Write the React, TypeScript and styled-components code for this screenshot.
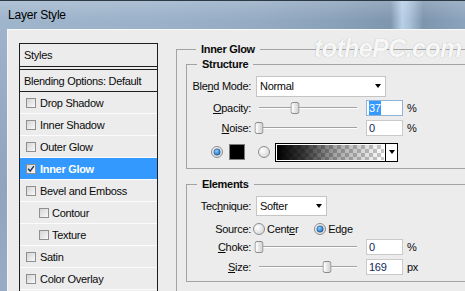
import React from "react";
import styled, { createGlobalStyle } from "styled-components";

const GlobalStyle = createGlobalStyle`
  html, body {
    margin: 0;
    padding: 0;
    overflow: hidden;
    background: #ececec;
  }
  body {
    font-family: "Liberation Sans", Arial, sans-serif;
    font-size: 11px;
    letter-spacing: -0.3px;
    color: #0a0a0a;
  }
`;

interface StyleItem {
  label: string;
  checked?: boolean;
  selected?: boolean;
  indent?: boolean;
}

const styleItems: StyleItem[] = [
  { label: "Drop Shadow" },
  { label: "Inner Shadow" },
  { label: "Outer Glow" },
  { label: "Inner Glow", checked: true, selected: true },
  { label: "Bevel and Emboss" },
  { label: "Contour", indent: true },
  { label: "Texture", indent: true },
  { label: "Satin" },
  { label: "Color Overlay" },
];

const Slider = ({ value, max }: { value: number; max: number }) => (
  <Track>
    <Groove />
    <Thumb style={{ left: `${(value / max) * 100}%` }}>
      <svg width="9" height="12" viewBox="0 0 9 12">
        <defs>
          <linearGradient id="thumbFill" x1="0" y1="0" x2="1" y2="0">
            <stop offset="0" stopColor="#fdfdfd" />
            <stop offset="1" stopColor="#cfcfcf" />
          </linearGradient>
        </defs>
        <path
          d="M0.5 2.5 Q0.5 0.5 2.5 0.5 H6.5 Q8.5 0.5 8.5 2.5 V9.5 Q8.5 11.5 6.5 11.5 H2.5 Q0.5 11.5 0.5 9.5 Z"
          fill="url(#thumbFill)"
          stroke="#8a8a8a"
        />
        <line x1="2.5" y1="3" x2="2.5" y2="9.5" stroke="#ffffff" />
      </svg>
    </Thumb>
  </Track>
);

const Radio = ({ on }: { on?: boolean }) => (
  <svg width="12" height="12" viewBox="0 0 12 12">
    <defs>
      <radialGradient id="radioFill" cx="0.35" cy="0.35" r="0.8">
        <stop offset="0" stopColor="#ffffff" />
        <stop offset="1" stopColor="#d2d2d2" />
      </radialGradient>
      <radialGradient id="radioDot" cx="0.4" cy="0.35" r="0.7">
        <stop offset="0" stopColor="#8fd0ff" />
        <stop offset="1" stopColor="#1565c0" />
      </radialGradient>
    </defs>
    <circle cx="6" cy="6" r="5.5" fill="url(#radioFill)" stroke="#8c8c8c" />
    {on && <circle cx="6" cy="6" r="3.2" fill="url(#radioDot)" stroke="#23507f" strokeWidth="0.6" />}
  </svg>
);

export default function App() {
  return (
    <>
      <GlobalStyle />
      <Window>
        <TitleBar>
          <Title>Layer Style</Title>
        </TitleBar>
        <Frame>
          <GlassEdge />
          <Body>
            <StylesPanel>
              <PanelHeader>Styles</PanelHeader>
              <PanelHeader $split>Blending Options: Default</PanelHeader>
              {styleItems.map((item) => (
                <StyleRow key={item.label} $indent={item.indent} $selected={item.selected}>
                  <CheckBox>
                    {item.checked && (
                      <svg width="8" height="8" viewBox="0 0 8 8">
                        <path d="M1.2 3.8 L3.2 6.2 L6.8 1.2" fill="none" stroke="#1d2d52" strokeWidth="1.4" />
                      </svg>
                    )}
                  </CheckBox>
                  <span>{item.label}</span>
                </StyleRow>
              ))}
            </StylesPanel>

            <OuterGroup>
              <Legend>Inner Glow</Legend>
              <Group $pb={6}>
                <Legend>Structure</Legend>
                <FieldRow $h={22}>
                  <Label>
                    Ble<Key>n</Key>d Mode:
                  </Label>
                  <Select $w={130} $h={21}>
                    <span>Normal</span>
                    <Arrow />
                  </Select>
                </FieldRow>
                <FieldRow $h={18} $mt={2}>
                  <Label>
                    <Key>O</Key>pacity:
                  </Label>
                  <Slider value={37} max={100} />
                  <NumberBox $focused>
                    <Highlight>37</Highlight>
                  </NumberBox>
                  <Unit>%</Unit>
                </FieldRow>
                <FieldRow $h={18} $mt={2}>
                  <Label>
                    <Key>N</Key>oise:
                  </Label>
                  <Slider value={0} max={100} />
                  <NumberBox>0</NumberBox>
                  <Unit>%</Unit>
                </FieldRow>
                <ColorRow>
                  <Radio on />
                  <Swatch />
                  <Radio />
                  <GradientPicker>
                    <GradientFill />
                    <PickerArrow>
                      <Arrow />
                    </PickerArrow>
                  </GradientPicker>
                </ColorRow>
              </Group>

              <Group $pb={5} $mt={9}>
                <Legend>Elements</Legend>
                <FieldRow $h={21}>
                  <Label>
                    Tec<Key>h</Key>nique:
                  </Label>
                  <Select $w={71} $h={20}>
                    <span>Softer</span>
                    <Arrow />
                  </Select>
                </FieldRow>
                <FieldRow $h={18} $mt={4}>
                  <Label>Source:</Label>
                  <RadioOption>
                    <Radio />
                    <span>
                      Cent<Key>e</Key>r
                    </span>
                  </RadioOption>
                  <RadioOption $gap={16}>
                    <Radio on />
                    <span>
                      Ed<Key>g</Key>e
                    </span>
                  </RadioOption>
                </FieldRow>
                <FieldRow $h={18}>
                  <Label>
                    <Key>C</Key>hoke:
                  </Label>
                  <Slider value={0} max={100} />
                  <NumberBox>0</NumberBox>
                  <Unit>%</Unit>
                </FieldRow>
                <FieldRow $h={18} $mt={2}>
                  <Label>
                    <Key>S</Key>ize:
                  </Label>
                  <Slider value={169} max={245} />
                  <NumberBox>169</NumberBox>
                  <Unit>px</Unit>
                </FieldRow>
              </Group>
            </OuterGroup>
          </Body>
        </Frame>
        <Watermark>tothePC.com</Watermark>
      </Window>
    </>
  );
}

const Window = styled.div`
  position: relative;
  width: 465px;
  height: 291px;
  overflow: hidden;
  display: flex;
  flex-direction: column;
`;

const TitleBar = styled.header`
  height: 28px;
  flex: none;
  display: flex;
  align-items: center;
  padding-left: 8px;
  border-top: 1px solid #2e3946;
  background:
    linear-gradient(to bottom, rgba(255, 255, 255, 0.18), rgba(255, 255, 255, 0) 70%),
    linear-gradient(
      to right,
      #9fb5cc 0%,
      #9ab1c9 35%,
      #94abc3 55%,
      #8aa1ba 72%,
      #7f96af 84%,
      #b8cfe5 86.5%,
      #a9c1d9 88%,
      #7e95ae 91%,
      #8ba3bc 100%
    );
`;

const Title = styled.span`
  font-size: 12px;
  color: #000;
  letter-spacing: -0.2px;
`;

const Frame = styled.div`
  flex: 1;
  display: flex;
  min-height: 0;
`;

const GlassEdge = styled.div`
  width: 7px;
  flex: none;
  background: linear-gradient(to bottom, #9db3ca, #8ea5bd 60%, #97adc5);
`;

const Body = styled.main`
  flex: 1;
  display: flex;
  align-items: flex-start;
  gap: 18px;
  padding: 13px 0 0 11px;
  background: #ececec;
  border-top: 1px solid #fafafa;
  border-left: 1px solid #f6f6f6;
  overflow: hidden;
`;

const StylesPanel = styled.nav`
  width: 139px;
  height: 260px;
  flex: none;
  box-sizing: border-box;
  border: 1px solid #1e1e1e;
  border-bottom: none;
  display: flex;
  flex-direction: column;
`;

const PanelHeader = styled.div<{ $split?: boolean }>`
  height: ${(p) => (p.$split ? 21 : 22)}px;
  flex: none;
  display: flex;
  align-items: center;
  padding-left: 4px;
  border-bottom: 1px solid #1e1e1e;
  ${(p) => (p.$split ? "border-top: 1px solid #1e1e1e; margin-top: 2px;" : "")}
`;

const StyleRow = styled.div<{ $indent?: boolean; $selected?: boolean }>`
  height: 21px;
  flex: none;
  display: flex;
  align-items: center;
  gap: ${(p) => (p.$indent ? 3 : 4)}px;
  padding-left: ${(p) => (p.$indent ? 19 : 6)}px;
  border-bottom: 1px solid #fcfcfc;
  background: ${(p) => (p.$selected ? "#3399ff" : "transparent")};
  color: ${(p) => (p.$selected ? "#ffffff" : "inherit")};
  font-weight: ${(p) => (p.$selected ? "bold" : "normal")};
`;

const CheckBox = styled.span`
  width: 10px;
  height: 10px;
  flex: none;
  box-sizing: border-box;
  border: 1px solid #8e8f8f;
  background: linear-gradient(135deg, #d4d4d4, #f9f9f9);
  display: flex;
  align-items: center;
  justify-content: center;
`;

const OuterGroup = styled.fieldset`
  width: 330px;
  flex: none;
  margin: 0;
  padding: 2px 0 40px 9px;
  border: 1px solid #a3a3a3;
  min-width: 0;
`;

const Group = styled.fieldset<{ $pb: number; $mt?: number }>`
  margin: ${(p) => p.$mt ?? 0}px 0 0 0;
  padding: 4px 0 ${(p) => p.$pb}px 0;
  border: 1px solid #a3a3a3;
  min-width: 0;
`;

const Legend = styled.legend`
  margin-left: 10px;
  padding: 0 5px;
  font-weight: bold;
  font-size: 11px;
  line-height: 13px;
`;

const FieldRow = styled.div<{ $h: number; $mt?: number }>`
  height: ${(p) => p.$h}px;
  margin-top: ${(p) => p.$mt ?? 0}px;
  display: flex;
  align-items: center;
`;

const Label = styled.label`
  width: 64px;
  flex: none;
  margin-right: 5px;
  text-align: right;
  white-space: nowrap;
`;

const Key = styled.span`
  text-decoration: underline;
`;

const Select = styled.div<{ $w: number; $h: number }>`
  width: ${(p) => p.$w}px;
  height: ${(p) => p.$h}px;
  box-sizing: border-box;
  background: #fff;
  border: 1px solid #c4c4c4;
  display: flex;
  align-items: center;
  justify-content: space-between;
  padding: 0 4px 0 3px;
`;

const Arrow = styled.span`
  width: 0;
  height: 0;
  border-left: 3.5px solid transparent;
  border-right: 3.5px solid transparent;
  border-top: 4px solid #000;
`;

const Track = styled.div`
  position: relative;
  width: 98px;
  height: 18px;
  margin-left: 3px;
  flex: none;
  display: flex;
  align-items: center;
`;

const Groove = styled.div`
  width: 100%;
  height: 0;
  border-top: 1px solid #a2a2a2;
  border-bottom: 1px solid #ffffff;
`;

const Thumb = styled.span`
  position: absolute;
  top: 50%;
  transform: translate(-50%, -50%);
  display: flex;
`;

const NumberBox = styled.div<{ $focused?: boolean }>`
  width: 37px;
  height: 16px;
  box-sizing: border-box;
  margin-left: 9px;
  background: #fff;
  border: 1px solid ${(p) => (p.$focused ? "#8fb3d9" : "#cacaca")};
  padding-left: 2px;
  display: flex;
  align-items: center;
  color: #10275a;
`;

const Highlight = styled.span`
  background: #3399ff;
  color: #fff;
  padding: 1px 0;
`;

const Unit = styled.span`
  margin-left: 4px;
`;

const ColorRow = styled.div`
  height: 20px;
  margin-top: 5px;
  padding-left: 24px;
  display: flex;
  align-items: center;
  & > svg:nth-of-type(2) {
    margin-left: 13px;
  }
`;

const Swatch = styled.span`
  width: 16px;
  height: 16px;
  margin-left: 6px;
  box-sizing: border-box;
  border: 1px solid #7c7c7c;
  background: #000;
`;

const GradientPicker = styled.div`
  width: 123px;
  height: 19px;
  margin-left: 5px;
  box-sizing: border-box;
  border: 1px solid #000;
  display: flex;
`;

const GradientFill = styled.div`
  flex: 1;
  border: 1px solid #fff;
  background:
    linear-gradient(to right, #000 0%, rgba(0, 0, 0, 0.78) 25%, rgba(0, 0, 0, 0.35) 55%, rgba(0, 0, 0, 0) 100%),
    repeating-conic-gradient(#c9c9c9 0 25%, #ffffff 0 50%) 0 0 / 8px 8px;
`;

const PickerArrow = styled.div`
  width: 11px;
  border-left: 1px solid #000;
  background: #fff;
  display: flex;
  align-items: center;
  justify-content: center;
`;

const RadioOption = styled.div<{ $gap?: number }>`
  display: flex;
  align-items: center;
  gap: 2px;
  margin-left: ${(p) => p.$gap ?? -3}px;
`;

const Watermark = styled.div`
  position: absolute;
  left: 314px;
  top: 34px;
  font-family: "Liberation Sans", Arial, sans-serif;
  font-weight: bold;
  font-style: italic;
  font-size: 25px;
  letter-spacing: -0.6px;
  color: #f7f7f7;
  text-shadow: 0 0 1px rgba(120, 120, 120, 0.55);
  pointer-events: none;
`;
